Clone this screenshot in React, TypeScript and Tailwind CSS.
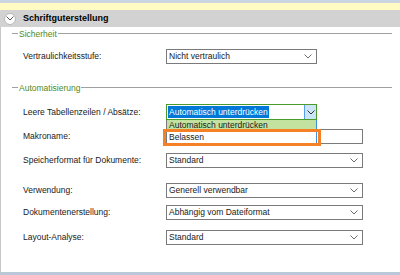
import React from "react";

const Chev = ({ color = "#6b6b6b" }: { color?: string }) => (
  <svg width="8" height="5" viewBox="0 0 8 5" className="block">
    <path d="M0.5 0.5 L4 4 L7.5 0.5" fill="none" stroke={color} strokeWidth="1" />
  </svg>
);

const Legend = ({ text }: { text: string }) => (
  <div className="flex items-center h-[12px] pl-[11px] pr-[8px]">
    <div className="w-[6px] h-[2px] border-t border-[#a0a0a0] border-b-white border-b" />
    <span className="text-[#4f8a1e] px-[1px] leading-none">{text}</span>
    <div className="flex-1 h-[2px] border-t border-[#a0a0a0] border-b border-b-white" />
  </div>
);

const Select = ({ text, w }: { text: string; w: string }) => (
  <div className={`${w} h-[15px] border border-[#7a7a7a] bg-white flex items-center pl-[2px] pr-[4px]`}>
    <span className="flex-1 leading-none">{text}</span>
    <Chev />
  </div>
);

const Row = ({ label, children, mt, h = "h-[15px]" }: { label: string; children: React.ReactNode; mt: string; h?: string }) => (
  <div className={`flex items-center ${h} ${mt}`}>
    <div className="w-[165px] shrink-0 pl-[22px] leading-none whitespace-nowrap">{label}</div>
    {children}
  </div>
);

export default function App() {
  return (
    <div
      className="w-[400px] h-[275px] bg-white relative overflow-hidden text-[8.5px] text-[#1a1a1a] flex flex-col"
      style={{ fontFamily: '"Liberation Sans", Arial, sans-serif' }}
    >
      <div className="h-[3px] bg-[#c9d5e2] shrink-0" />
      <div className="h-[7px] bg-[#fffbc2] shrink-0" />
      <div className="h-[17px] bg-[#d2d2d2] flex items-center shrink-0 pl-[4px]">
        <div className="w-[12px] h-[12px] rounded-full bg-white border border-[#b8b8b8] flex items-center justify-center">
          <Chev color="#555" />
        </div>
        <span className="ml-[7px] font-bold text-[9px] text-black">Schriftguterstellung</span>
      </div>
      <div className="flex-1 border-l border-[#c8c8c8] border-b-[3px] border-b-[#b9c9d9] relative">
        <div className="mt-[1px]">
          <Legend text="Sicherheit" />
        </div>
        <Row label="Vertraulichkeitsstufe:" mt="mt-[9px]">
          <Select text="Nicht vertraulich" w="w-[151px]" />
        </Row>
        <div className="mt-[18px]">
          <Legend text="Automatisierung" />
        </div>
        <Row label="Leere Tabellenzeilen / Absätze:" mt="mt-[10px]" h="h-[16px]">
          <div className="w-[151px] h-[16px] border border-[#4a9a2c] bg-white flex items-center pl-[1px]">
            <span className="flex-1 leading-none">
              <span className="bg-[#0078d7] text-white px-[1px] py-[1px]">Automatisch unterdrücken</span>
            </span>
            <div className="w-[12px] h-full bg-[#cce4f7] border-l border-[#569de5] flex items-center justify-center">
              <Chev color="#333" />
            </div>
          </div>
        </Row>
        <Row label="Makroname:" mt="mt-[9px]">
          <div className="w-[197px] h-[15px] border border-[#7a7a7a] bg-white" />
        </Row>
        <Row label="Speicherformat für Dokumente:" mt="mt-[9px]">
          <Select text="Standard" w="w-[197px]" />
        </Row>
        <Row label="Verwendung:" mt="mt-[15px]">
          <Select text="Generell verwendbar" w="w-[197px]" />
        </Row>
        <Row label="Dokumentenerstellung:" mt="mt-[7px]">
          <Select text="Abhängig vom Dateiformat" w="w-[197px]" />
        </Row>
        <Row label="Layout-Analyse:" mt="mt-[10px]">
          <Select text="Standard" w="w-[197px]" />
        </Row>

        {/* dropdown list overlay */}
        <div className="absolute left-[165px] top-[93px] w-[151px] h-[25px] bg-white border border-[#7a7a7a] border-r-[#3c8fd9] border-t-0 flex flex-col">
          <div className="h-[11px] bg-[#c3e29f] leading-none pl-[2px] flex items-center">Automatisch unterdrücken</div>
          <div className="h-[12px] leading-none pl-[2px] flex items-center">Belassen</div>
        </div>
        <div className="absolute left-[162px] top-[102px] w-[158px] h-[17px] border-[3px] border-[#f58025]" />
      </div>
    </div>
  );
}
